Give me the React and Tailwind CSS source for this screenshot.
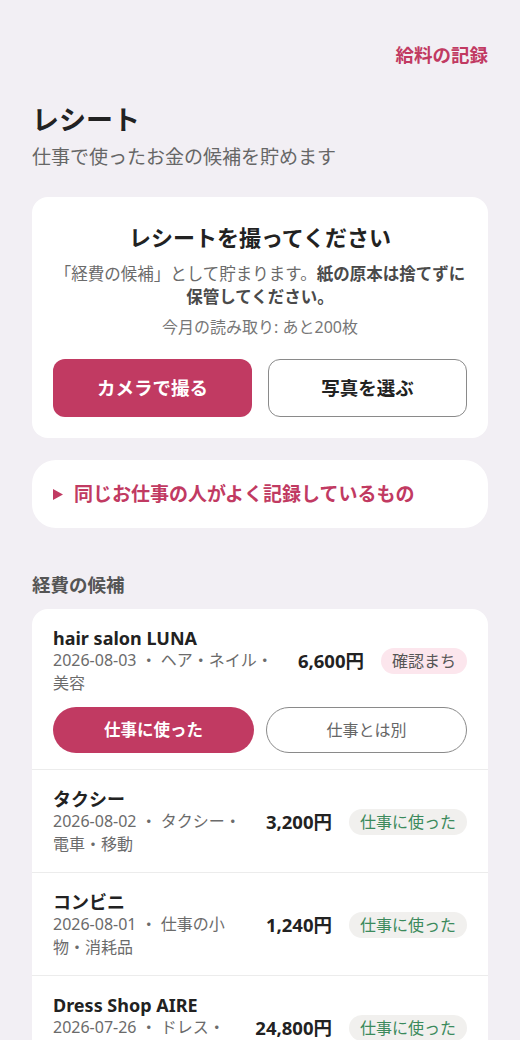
import React from 'react';

const items = [
  { name: 'hair salon LUNA', date: '2026-08-03', cat: 'ヘア・ネイル・美容', price: '6,600円', status: 'pending' },
  { name: 'タクシー', date: '2026-08-02', cat: 'タクシー・電車・移動', price: '3,200円', status: 'work' },
  { name: 'コンビニ', date: '2026-08-01', cat: '仕事の小物・消耗品', price: '1,240円', status: 'work' },
  { name: 'Dress Shop AIRE', date: '2026-07-26', cat: 'ドレス・衣装', price: '24,800円', status: 'work' },
];

const ExpenseRow = ({ item, last }) => (
  <div className={`px-[21px] pt-[18px] pb-4 ${last ? '' : 'border-b border-[#ececec]'}`}>
    <div className="flex items-center">
      <div className="flex-1 min-w-0 pr-4">
        <div className="text-[18px] leading-[22px] font-bold text-[#222]">{item.name}</div>
        <div className="text-[16px] leading-[23px] text-[#6b6b6b]">
          {item.date} ・ {item.cat}
        </div>
      </div>
      <div className="text-[18.5px] font-bold text-[#222] whitespace-nowrap">{item.price}</div>
      {item.status === 'pending' ? (
        <span className="ml-[17px] rounded-full bg-[#fce6ed] px-[11px] py-px text-[16px] leading-6 text-[#555] whitespace-nowrap">
          確認まち
        </span>
      ) : (
        <span className="ml-[17px] rounded-full bg-[#f1f0ee] px-[11px] py-px text-[16px] leading-6 text-[#3b8a5c] whitespace-nowrap">
          仕事に使った
        </span>
      )}
    </div>
    {item.status === 'pending' && (
      <div className="mt-3 grid grid-cols-2 gap-3">
        <button className="h-[46px] rounded-full bg-[#c13a62] text-[16.5px] font-bold text-white">
          仕事に使った
        </button>
        <button className="h-[46px] rounded-full border-[1.5px] border-[#8a8a8a] bg-white text-[16px] text-[#666]">
          仕事とは別
        </button>
      </div>
    )}
  </div>
);

export default function App() {
  return (
    <div
      className="min-h-[1040px] bg-[#f2eff4] px-8 pt-[42px] pb-10"
      style={{ fontFamily: '"Noto Sans", "Noto Sans CJK JP", sans-serif' }}
    >
      <div className="flex justify-end">
        <a className="text-[18.5px] leading-[26px] font-bold text-[#c13a62]">給料の記録</a>
      </div>

      <h1 className="mt-[34px] text-[27px] leading-9 font-bold text-[#222]">レシート</h1>
      <p className="mt-[6px] text-[19px] leading-[26px] text-[#666]">仕事で使ったお金の候補を貯めます</p>

      <section className="mt-[27px] rounded-2xl bg-white px-[21px] pt-[25px] pb-[21px] text-center">
        <h2 className="text-[22px] leading-[30px] font-bold text-[#222]">レシートを撮ってください</h2>
        <p className="mt-[10px] text-[16.5px] leading-[23px] text-[#6b6b6b]">
          「経費の候補」として貯まります。
          <span className="font-bold text-[#4a4a4a]">紙の原本は捨てずに保管してください。</span>
        </p>
        <p className="mt-2 text-[16px] leading-[22px] text-[#777]">今月の読み取り: あと200枚</p>
        <div className="mt-[21px] grid grid-cols-2 gap-4">
          <button className="h-[58px] rounded-xl bg-[#c13a62] text-[18.5px] font-bold text-white">
            カメラで撮る
          </button>
          <button className="h-[58px] rounded-xl border-[1.5px] border-[#8a8a8a] bg-white text-[18.5px] font-bold text-[#222]">
            写真を選ぶ
          </button>
        </div>
      </section>

      <section className="mt-[22px] rounded-3xl bg-white px-[21px] py-[21px]">
        <div className="flex items-center text-[19px] leading-[26px] font-bold text-[#c13a62]">
          <svg width="10" height="11" viewBox="0 0 10 11" className="mr-[11px] shrink-0">
            <path d="M0 0 L10 5.5 L0 11 Z" fill="#c13a62" />
          </svg>
          同じお仕事の人がよく記録しているもの
        </div>
      </section>

      <h3 className="mt-[45px] text-[18.5px] leading-6 font-bold text-[#555]">経費の候補</h3>

      <div className="mt-3 overflow-hidden rounded-2xl bg-white">
        {items.map((item, i) => (
          <ExpenseRow key={item.name} item={item} last={i === items.length - 1} />
        ))}
      </div>
    </div>
  );
}
